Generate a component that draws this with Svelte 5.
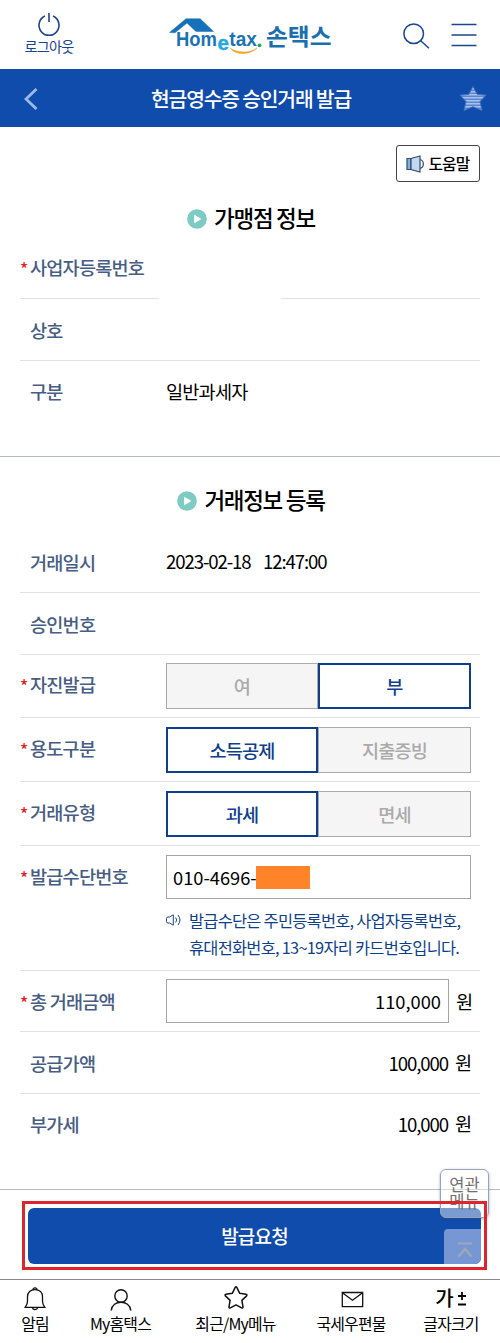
<script lang="ts">
    type Choice = { label: string; options: string[]; selected: string };

    let choices: Choice[] = $state([
        { label: '자진발급', options: ['여', '부'], selected: '부' },
        { label: '용도구분', options: ['소득공제', '지출증빙'], selected: '소득공제' },
        { label: '거래유형', options: ['과세', '면세'], selected: '과세' }
    ]);

    const amounts = [
        { label: '공급가액', value: '100,000' },
        { label: '부가세', value: '10,000' }
    ];
</script>

{#snippet sectionTitle(text: string)}
    <h2 class="section-title">
        <svg width="20" height="20" viewBox="0 0 20 20">
            <circle cx="10" cy="10" r="9.8" fill="#7ecbc4" />
            <path d="M7.6 6.4v7.2l6.1-3.6z" fill="#fff" stroke="#fff" stroke-width="1" stroke-linejoin="round" />
        </svg>
        <span>{text}</span>
    </h2>
{/snippet}

{#snippet fieldLabel(text: string, required: boolean)}
    <div class="label"><span class="star">{required ? '*' : ''}</span>{text}</div>
{/snippet}

<div class="page">
    <header class="top">
        <button class="logout">
            <svg width="24" height="24" viewBox="0 0 24 24" fill="none" stroke="#1a4591" stroke-width="1.6">
                <path d="M8 3.1a10 10 0 1 0 8 0M12 0v9"></path>
            </svg>
            <span>로그아웃</span>
        </button>
        <svg class="logo" width="166" height="44" viewBox="0 0 166 44">
            <path d="M.5 16.500L17 2.800h14.200l13.300 12.700H27L18 7L6 16.800z" fill="#1671b8" stroke="#1671b8" stroke-width=".5" />
            <text class="latin" x="7" y="29.600" font-size="20" textLength="41" lengthAdjust="spacingAndGlyphs" fill="#1a72b5">Hom</text>
            <text class="latin" x="48.500" y="33.500" font-size="20.500" fill="#22a9df" stroke="#22a9df" stroke-width=".4">e</text>
            <text class="latin" x="60.300" y="29.800" font-size="20" textLength="27.500" lengthAdjust="spacingAndGlyphs" fill="#1a72b5">tax</text>
            <circle cx="90.500" cy="29.300" r="1.900" fill="#25a45a" />
            <path d="M61.500 32.500c5 6.500 19 7 26.500-.5c-7 5-18 5.500-26.500.5z" fill="#efa62d" stroke="#efa62d" stroke-width=".6" />
            <text class="hangul" x="97" y="28.700" font-size="23" textLength="65.500" lengthAdjust="spacingAndGlyphs" fill="#1a6fae">손택스</text>
        </svg>
        <div class="tools">
            <svg width="27" height="27" viewBox="0 0 27 27" fill="none" stroke="#1a4591" stroke-width="1.5">
                <circle cx="10.700" cy="10.700" r="9.800"></circle>
                <path d="M17.700 17.700l8.300 7.500"></path>
            </svg>
            <svg width="26" height="24" viewBox="0 0 26 24" stroke="#1a4591" stroke-width="1.700">
                <path d="M.5 1.500h25M.5 12h25M.5 22.500h25"></path>
            </svg>
        </div>
    </header>

    <div class="title-bar">
        <svg width="14" height="22" viewBox="0 0 14 22" fill="none" stroke="#9db8e6" stroke-width="2.800">
            <path d="M12.500 1L2 11l10.500 10"></path>
        </svg>
        <h1>현금영수증 승인거래 발급</h1>
        <svg width="28" height="28" viewBox="0 0 28 28">
            <defs>
                <pattern id="stripes" width="28" height="3" patternUnits="userSpaceOnUse">
                    <rect width="28" height="3" fill="#5a86cf" />
                    <rect width="28" height="1.500" fill="#a9c1ea" />
                </pattern>
            </defs>
            <path d="M14 1.500l4.200 7.800 8.800.9-6 6.300 2 9-9-3.800-9 3.800 2-9-6-6.300 8.800-.9z" fill="url(#stripes)" stroke="#3e70c1" stroke-width="1" stroke-linejoin="round" />
        </svg>
    </div>

    <main>
        <section class="merchant">
            <button class="help">
                <svg width="19" height="18" viewBox="0 0 19 18" stroke="#334d6b" stroke-width="1.200">
                    <path d="M1 3.500h4v11H1z" fill="#7fb2e0"></path>
                    <path d="M5 3.500L14 1v16l-9-2.500z" fill="#c3d9f0"></path>
                    <path d="M14 4.500c4.500 1.500 4.500 7.500 0 9" fill="none"></path>
                </svg>
                <span>도움말</span>
            </button>
            {@render sectionTitle('가맹점 정보')}
            <div class="row split-line">
                {@render fieldLabel('사업자등록번호', true)}
            </div>
            <div class="row">
                {@render fieldLabel('상호', false)}
            </div>
            <div class="row last">
                {@render fieldLabel('구분', false)}
                <div class="value">일반과세자</div>
            </div>
        </section>

        <section class="deal">
            {@render sectionTitle('거래정보 등록')}
            <div class="row">
                {@render fieldLabel('거래일시', false)}
                <div class="value date"><span>2023-02-18</span><span>12:47:00</span></div>
            </div>
            <div class="row">
                {@render fieldLabel('승인번호', false)}
            </div>
            {#each choices as choice}
                <div class="row choice-row">
                    {@render fieldLabel(choice.label, true)}
                    <div class="choices">
                        {#each choice.options as option}
                            <button
                                class:on={choice.selected === option}
                                onclick={() => (choice.selected = option)}
                            >{option}</button>
                        {/each}
                    </div>
                </div>
            {/each}
            <div class="row number-row">
                {@render fieldLabel('발급수단번호', true)}
                <div class="number">
                    <div class="input">010-4696-<span class="mask"></span></div>
                    <div class="note">
                        <svg width="16" height="14" viewBox="0 0 16 14" fill="none" stroke="#1a4591" stroke-width="1">
                            <path d="M7.300 1.800v10.400L3.500 10H2Q.5 10 .5 8.500v-3Q.5 4 2 4h1.500z"></path>
                            <path d="M9.700 4.500q1.800 2.500 0 5M12 2q4 5 0 10"></path>
                        </svg>
                        <p>발급수단은 주민등록번호, 사업자등록번호,<br />휴대전화번호, 13~19자리 카드번호입니다.</p>
                    </div>
                </div>
            </div>
            <div class="row total-row">
                {@render fieldLabel('총 거래금액', true)}
                <div class="amount">
                    <div class="input right">110,000</div>
                    <span class="won">원</span>
                </div>
            </div>
            {#each amounts as amount, i}
                <div class="row" class:last={i === amounts.length - 1}>
                    {@render fieldLabel(amount.label, false)}
                    <div class="amount">
                        <span class="sum">{amount.value}</span>
                        <span class="won">원</span>
                    </div>
                </div>
            {/each}
        </section>
    </main>

    <div class="submit-area">
        <button class="related"><span>연관</span><span>메뉴</span></button>
        <div class="frame">
            <button class="submit">발급요청
                <span class="to-top">
                    <svg width="16" height="16" viewBox="0 0 16 16" fill="none" stroke="#a2a7b8" stroke-width="2.200">
                        <path d="M1 1.500h14M1.500 14.500L8 7l6.500 7.500"></path>
                    </svg>
                </span>
            </button>
        </div>
    </div>

    <nav>
        <a href="#alarm">
            <svg width="26" height="26" viewBox="0 0 26 26" fill="none" stroke="#111" stroke-width="1.300">
                <path d="M11 4.800a2 2 0 0 1 4 0M3.200 22.300h19.600c-1.300-2-2.300-3.300-2.300-6v-4.500c0-4.500-3-7.200-7.500-7.200s-7.500 2.700-7.500 7.200v4.500c0 2.700-1 4-2.300 6zM10.300 22.500c.5 2.700 4.900 2.700 5.400 0"></path>
            </svg>
            <span>알림</span>
        </a>
        <a href="#my">
            <svg width="26" height="26" viewBox="0 0 26 26" fill="none" stroke="#111" stroke-width="1.400">
                <circle cx="13" cy="11" r="6.200"></circle>
                <path d="M3.200 25.500c1-11 18.600-11 19.600 0"></path>
            </svg>
            <span>My홈택스</span>
        </a>
        <a href="#recent">
            <svg width="26" height="26" viewBox="0 0 26 26" fill="none" stroke="#111" stroke-width="1.500" stroke-linejoin="round">
                <path d="M13.800 2.300q-.8-1.300-1.600 0L9.300 8.300l-6.300.9q-1.500.4-.6 1.700l4.700 4.500-1.100 6.500q0 1.500 1.400 1l5.600-3 5.600 3q1.400.5 1.400-1l-1.100-6.500 4.700-4.500q.9-1.300-.6-1.700l-6.300-.9z"></path>
            </svg>
            <span>최근/My메뉴</span>
        </a>
        <a href="#mail">
            <svg class="mail" width="26" height="26" viewBox="0 0 26 26" fill="none" stroke="#111" stroke-width="1.300">
                <path d="M4.300 7.500h20.400v14.200H4.300zM5 8.200l9.500 7L24 8.200"></path>
            </svg>
            <span>국세우편물</span>
        </a>
        <a href="#size">
            <b class="size-icon">가<svg width="10" height="18" viewBox="0 0 10 18" stroke="#000" stroke-width="1.800" fill="none"><path d="M1 7h8M5 3v8M1 15.500h8"></path></svg></b>
            <span>글자크기</span>
        </a>
    </nav>
</div>

<style>
    :global(body) {
        margin: 0;
        background: #fff;
    }

    .page {
        width: 500px;
        height: 1343px;
        display: flex;
        flex-direction: column;
        overflow: hidden;
        background: #fff;
        color: #000;
        font-family: "Noto Sans CJK KR", "Noto Sans", sans-serif;
        font-size: 18.600px;
        letter-spacing: -0.800px;
    }

    .page * {
        box-sizing: border-box;
    }

    button {
        font: inherit;
        letter-spacing: inherit;
        color: inherit;
        padding: 0;
        border: 0;
        background: none;
    }

    h1,
    h2,
    p {
        margin: 0;
    }

    svg {
        display: block;
        flex: none;
    }

    .top {
        height: 69px;
        display: flex;
        justify-content: space-between;
        padding: 0 23px 0 23px;
    }

    .logout {
        display: flex;
        flex-direction: column;
        align-items: center;
        width: 52px;
        padding-top: 13px;
        color: #1a4591;
        font-size: 14.200px;
        line-height: 19px;
    }

    .logo {
        margin: 16px 0 0 94px;
    }

    .latin {
        font-family: "Liberation Sans", Arial, sans-serif;
        font-weight: 700;
        letter-spacing: 0;
    }

    .hangul {
        font-weight: 700;
        letter-spacing: 0;
    }

    .tools {
        display: flex;
        gap: 21px;
        align-items: flex-start;
        margin-left: auto;
        padding-top: 23px;
    }

    .title-bar {
        height: 58px;
        display: flex;
        align-items: center;
        justify-content: space-between;
        padding: 2px 13px 0 24px;
        background: #0f4cac;
        color: #fff;
    }

    h1 {
        font-size: 20.400px;
        font-weight: 500;
        letter-spacing: -1.200px;
        padding: 0 0 3px 5px;
    }

    .merchant {
        height: 330px;
        padding: 18px 20px 0;
        border-bottom: 1px solid #b5bac8;
    }

    .help {
        display: flex;
        align-items: center;
        justify-content: center;
        gap: 3px;
        width: 84px;
        height: 37px;
        margin-left: auto;
        border: 1px solid #444;
        border-radius: 3px;
        font-size: 15.800px;
        font-weight: 500;
    }

    .help span {
        padding-bottom: 1px;
    }

    .section-title {
        display: flex;
        align-items: center;
        justify-content: center;
        gap: 7px;
        height: 36px;
        margin-top: 19px;
        padding-left: 2px;
        font-size: 22.500px;
        font-weight: 500;
        letter-spacing: -1.300px;
    }

    .section-title span {
        padding-bottom: 4px;
    }

    .row {
        display: flex;
        align-items: center;
        height: 62px;
        border-bottom: 1px solid #e2e2e4;
    }

    .row.last {
        border-bottom: 0;
    }

    .split-line {
        border-bottom: 1px solid;
        border-image: linear-gradient(90deg, #e2e2e4 139px, transparent 139px, transparent 261px, #e2e2e4 261px) 1;
    }

    .label {
        display: flex;
        flex: none;
        width: 146px;
        padding-bottom: 1px;
        color: #475d83;
        font-weight: 500;
    }

    .row.last .label,
    .row.last .value,
    .row.last .amount {
        padding-bottom: 3px;
    }

    .star {
        width: 10px;
        flex: none;
        padding-top: 3px;
        color: #e01f26;
        font-size: 17px;
    }

    .value {
        padding-bottom: 2px;
    }

    .date {
        display: flex;
        gap: 12.500px;
        letter-spacing: -1.100px;
    }

    .deal {
        height: 732px;
        padding: 0 20px;
    }

    .deal .section-title {
        margin: 0;
        padding: 26px 0 12px 2px;
        height: 74px;
    }

    .choice-row {
        height: 64px;
        padding-top: 1px;
    }

    .choice-row:nth-of-type(3) {
        height: 63px;
        padding-top: 0;
    }

    .choice-row .label {
        padding-bottom: 4px;
    }

    .choices {
        display: grid;
        grid-template-columns: 152px 153px;
        width: 305px;
        height: 46px;
    }

    .choices button {
        padding-bottom: 2px;
        border: 1px solid #aaa;
        background: #f5f5f5;
        color: #aaa;
        font-weight: 500;
    }

    .choices button.on {
        border: 2px solid #0f3f8c;
        background: #fff;
        color: #0f3f8c;
    }

    .number-row {
        height: 125px;
        align-items: flex-start;
        padding-top: 9px;
    }

    .number-row .label {
        line-height: 42px;
    }

    .number-row .star {
        padding-top: 2px;
    }

    .number {
        width: 305px;
    }

    .input {
        display: flex;
        align-items: center;
        height: 44px;
        padding: 0 7px 1px 6px;
        border: 1px solid #a5a5a5;
        font-size: 18.300px;
        letter-spacing: 0;
    }

    .mask {
        width: 54px;
        height: 23px;
        margin: 1px 0 0 -1px;
        background: #ff8429;
    }

    .note {
        display: flex;
        gap: 7px;
        padding-top: 8px;
        color: #103f8a;
        font-size: 16.400px;
        line-height: 27px;
        letter-spacing: -0.750px;
        white-space: nowrap;
    }

    .note svg {
        margin-top: 6px;
    }

    .total-row {
        height: 61px;
    }

    .amount {
        flex: 1;
        display: flex;
        align-items: center;
        justify-content: flex-end;
        padding-right: 9px;
    }

    .right {
        width: 283px;
        justify-content: flex-end;
    }

    .won {
        width: 16px;
        margin-left: 7px;
        padding-bottom: 2px;
    }

    .sum {
        padding-bottom: 1px;
        letter-spacing: -1.100px;
    }

    .submit-area {
        position: relative;
        height: 90px;
        padding: 11px 13px 0 22px;
        border-top: 1px solid #b5bac8;
    }

    .frame {
        position: relative;
        height: 69px;
        padding: 4px 3px 3px;
        border: 3px solid #dc252c;
    }

    .submit {
        position: relative;
        width: 453px;
        height: 56px;
        padding-bottom: 2px;
        border-radius: 6px;
        overflow: hidden;
        background: #0f4cac;
        color: #fff;
        font-size: 19px;
        font-weight: 500;
    }

    .to-top {
        position: absolute;
        right: 0;
        bottom: 0;
        width: 37px;
        height: 35px;
        padding: 13px 0 0 13px;
        border-radius: 4px 0 0 0;
        background: #7697d4;
    }

    /* floating shortcut, half hidden by the submit frame */
    .related {
        position: absolute;
        top: -21px;
        left: 440px;
        width: 49px;
        height: 49px;
        display: flex;
        flex-direction: column;
        border: 1px solid #98a3ba;
        border-radius: 6px;
        background: rgba(255, 255, 255, 0.45);
        box-shadow: 0 1px 3px rgba(60, 70, 100, 0.45);
        color: #707070;
        font-size: 16.500px;
        line-height: 17px;
        padding-top: 6px;
        align-items: center;
        z-index: 1;
        letter-spacing: 0;
    }

    .frame::after {
        content: '';
        position: absolute;
        inset: -3px;
        z-index: 2;
        border: 3px solid #dc252c;
    }

    nav {
        display: grid;
        grid-template-columns: 70px 101px 129px 102px 98px;
        height: 64px;
        border-top: 1px solid #888;
    }

    nav a {
        display: flex;
        flex-direction: column;
        align-items: center;
        padding-top: 5px;
        color: #000;
        text-decoration: none;
        font-size: 15.900px;
        line-height: 26px;
        white-space: nowrap;
    }

    .size-icon {
        display: flex;
        align-items: center;
        gap: 4px;
        height: 26px;
        font-size: 20px;
        font-weight: 500;
        line-height: 26px;
    }
</style>
